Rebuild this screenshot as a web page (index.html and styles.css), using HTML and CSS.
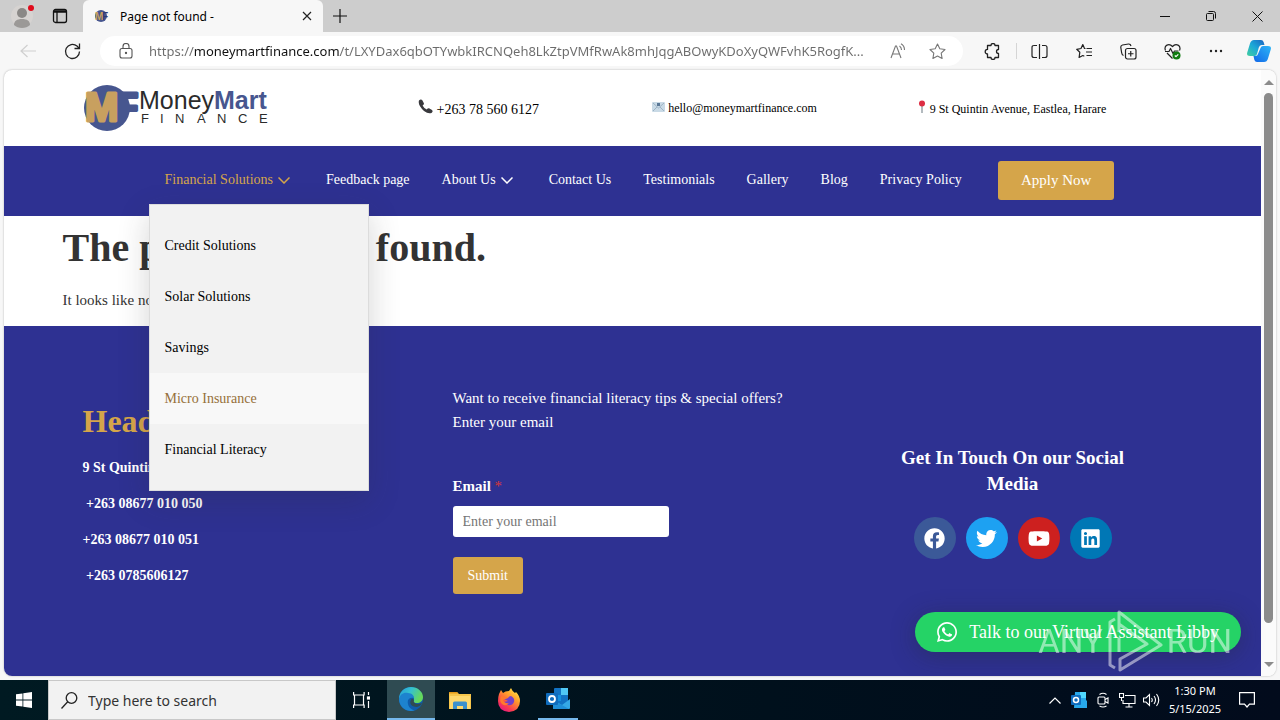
FILE: index.html
```
<!DOCTYPE html>
<html lang="en">
<head>
<meta charset="utf-8">
<title>Page not found -</title>
<link rel="stylesheet" href="styles.css">
</head>
<body>
<div class="tabstrip">
	<button class="chromeBtn profile" aria-label="Profile">
		<svg width="26" height="26" viewBox="0 0 26 26"><circle cx="12" cy="13" r="11" fill="#d6d3d1"/><circle cx="12" cy="10" r="5" fill="#8a8886"/><path d="M4 22c0-4 3-6 8-6s8 2 8 6c-2 2-5 3-8 3s-6-1-8-3z" fill="#9b9997"/><circle cx="21" cy="5" r="3" fill="#e00b1c"/></svg>
	</button>
	<button class="chromeBtn workspaces" aria-label="Tab actions">
		<svg width="16" height="16" viewBox="0 0 16 16" fill="none" stroke="#111" stroke-width="1.3"><rect x="1.5" y="1.5" width="13" height="13" rx="2"/><path d="M2 3.5h12" stroke-width="2.5"/><path d="M5 4v10"/></svg>
	</button>
	<div class="tab">
		<svg width="14" height="14" viewBox="0 0 14 14"><circle cx="6" cy="7" r="6" fill="#47568f"/><text x="7" y="11" class="favF">F</text><text x="0" y="11" class="favM">M</text></svg>
		<span class="tabTitle">Page not found -</span>
		<button class="chromeBtn" aria-label="Close tab"><svg width="10" height="10" viewBox="0 0 10 10" stroke="#222" stroke-width="1.2"><path d="M1 1l8 8M9 1l-8 8"/></svg></button>
	</div>
	<button class="chromeBtn newTab" aria-label="New tab"><svg width="14" height="14" viewBox="0 0 14 14" stroke="#111" stroke-width="1.2"><path d="M7 0v14M0 7h14"/></svg></button>
	<div class="windowBtns">
		<button class="chromeBtn" aria-label="Minimize"><svg width="10" height="10" viewBox="0 0 10 10" stroke="#111"><path d="M0 5.500h10"/></svg></button>
		<button class="chromeBtn" aria-label="Restore"><svg width="10" height="10" viewBox="0 0 10 10" fill="none" stroke="#111"><rect x=".5" y="2.500" width="7" height="7" rx="1"/><path d="M2.500.5h5q2 0 2 2v5"/></svg></button>
		<button class="chromeBtn" aria-label="Close window"><svg width="11" height="11" viewBox="0 0 11 11" stroke="#111"><path d="M.5.5l10 10M10.500.5l-10 10"/></svg></button>
	</div>
</div>
<div class="toolbar">
	<button class="chromeBtn navBtn" aria-label="Back"><svg width="16" height="14" viewBox="0 0 16 14" fill="none" stroke="#cfcfcf" stroke-width="1.2"><path d="M7.500 1L1 7l6.500 6M1 7h15"/></svg></button>
	<button class="chromeBtn navBtn" aria-label="Refresh"><svg width="17" height="17" viewBox="0 0 17 17" fill="none" stroke="#222" stroke-width="1.300"><path d="M15.500 8.500a7 7 0 1 1-2.500-5.400l2 2M15.500.5v5h-5"/></svg></button>
	<div class="address">
		<svg width="14" height="16" viewBox="0 0 14 16" fill="none" stroke="#555" stroke-width="1.1"><rect x="1" y="5.500" width="12" height="9.500" rx="2"/><path d="M4 5.500V3.500a3 3 0 0 1 6 0v2"/><circle cx="7" cy="10" r=".6" fill="#555"/></svg>
		<input type="text" class="url" aria-label="Address" value="https://moneymartfinance.com/t/LXYDax6qbOTYwbkIRCNQeh8LkZtpVMfRwAk8mhJqgABOwyKDoXyQWFvhK5RogfK...">
		<button class="chromeBtn" aria-label="Read aloud"><svg width="16" height="16" viewBox="0 0 16 16" fill="none" stroke="#777" stroke-width="1.1"><path d="M1 15L5.500 3h1L11 15M2.500 11h7M9.500 3q2 1.500 2 4M11 .8q3.500 2 3.500 6.200"/></svg></button>
		<button class="chromeBtn" aria-label="Favorite"><svg width="17" height="17" viewBox="0 0 17 17" fill="none" stroke="#777" stroke-width="1.1" stroke-linejoin="round"><path d="M8.500 1l2.300 4.800 5.200.7-3.800 3.700.9 5.300-4.600-2.500-4.600 2.500.9-5.300L1 6.500l5.200-.7z"/></svg></button>
	</div>
	<div class="tools">
		<button class="chromeBtn" aria-label="Extensions"><svg width="17" height="17" viewBox="0 0 17 17" fill="none" stroke="#222" stroke-width="1.300" stroke-linejoin="round"><path d="M4.500 2.500H7a2 2 0 0 1 4 0h3.500V6.500a2 2 0 0 0 0 4v4H11a2 2 0 0 1-4 0H3.500V11a2.300 2.300 0 0 1 0-4.600V2.500z"/></svg></button>
		<button class="chromeBtn divided" aria-label="Split screen"><svg width="17" height="17" viewBox="0 0 17 17" fill="none" stroke="#222" stroke-width="1.200"><path d="M6 2.500H3q-2 0-2 2v8q0 2 2 2h3M11 2.500h3q2 0 2 2v8q0 2-2 2h-3M8.500 1v15"/></svg></button>
		<button class="chromeBtn" aria-label="Favorites"><svg width="17" height="17" viewBox="0 0 17 17" fill="none" stroke="#222" stroke-width="1.200" stroke-linejoin="round"><path d="M9.500 5.500h-1L6.800 1.500 5 5.500l-4.300.8 3.100 3-.7 5.200 3.700-2 1.500.8M10.500 5.500H16M10 9h6M10.500 12.500H16"/></svg></button>
		<button class="chromeBtn" aria-label="Collections"><svg width="17" height="17" viewBox="0 0 17 17" fill="none" stroke="#222" stroke-width="1.200"><rect x="5.500" y="5.500" width="10.500" height="10.500" rx="2"/><path d="M10.750 8v5.500M8 10.750h5.500M3.500 12.500Q2 12 1.700 10L.8 4.500q-.2-2 1.700-2.500l6-1q2-.2 2.500 2"/></svg></button>
		<button class="chromeBtn" aria-label="Browser essentials"><svg width="17" height="17" viewBox="0 0 17 17" fill="none" stroke="#222" stroke-width="1.200" stroke-linejoin="round"><path d="M1.500 7.500C-.5 2.500 5-.5 8.500 3.500c3.500-4 9-1 7 4M3 10l5.500 5.500M1 8.500h4l1.500-3 2.500 5 1.500-2.500h4"/><circle cx="12.500" cy="12.500" r="4" fill="#107c10" stroke="none"/><path d="M10.800 12.500l1.200 1.200 2.300-2.300" stroke="#fff"/></svg></button>
		<button class="chromeBtn" aria-label="Settings and more"><svg width="16" height="4" viewBox="0 0 16 4" fill="#222"><circle cx="3" cy="2" r="1.200"/><circle cx="8" cy="2" r="1.200"/><circle cx="13" cy="2" r="1.200"/></svg></button>
		<button class="chromeBtn" aria-label="Copilot"><svg width="24" height="24" viewBox="0 0 24 24"><defs><linearGradient id="cp1" x1="0" y1="1" x2="1" y2="0"><stop offset="0" stop-color="#43cf9f"/><stop offset=".5" stop-color="#1ba7d8"/><stop offset="1" stop-color="#1b62c0"/></linearGradient><linearGradient id="cp2" x1="0" y1="1" x2="1" y2="0"><stop offset="0" stop-color="#1267e8"/><stop offset="1" stop-color="#2db5f6"/></linearGradient></defs><path d="M7 1h7q2 0 2.600 2l.9 3h-3q-2 0-2.700 2.500L10 15q-.6 2-2.500 2H3q-4 0-2.600-4L3 4.500Q4 1 7 1z" fill="url(#cp1)"/><path d="M17 23h-7q-2 0-2.600-2l-.9-4h2q2 0 2.700-2.500L13.500 9q.7-2 2.500-2h5q4 0 2.600 4L21 19.500Q20 23 17 23z" fill="url(#cp2)"/></svg></button>
	</div>
</div>
<div class="viewport">
	<div class="page">
		<header class="siteHeader">
			<a class="logo" href="#" aria-label="MoneyMart Finance">
				<svg width="188" height="50" viewBox="0 0 188 50">
					<circle cx="24" cy="25" r="23" fill="#47568f"/>
					<text x="31" y="38" class="logoF">F</text>
					<text x="2" y="38" class="logoM">M</text>
					<text x="56" y="26" class="logoName">Money<tspan class="logoBold">Mart</tspan></text>
					<g class="logoSub"><text x="58" y="40">F</text><text x="77" y="40">I</text><text x="92" y="40">N</text><text x="114" y="40">A</text><text x="134" y="40">N</text><text x="155" y="40">C</text><text x="176" y="40">E</text></g>
				</svg>
			</a>
			<div class="contact large"><svg width="15" height="15" viewBox="0 0 15 15"><path d="M1 1.500Q3-.5 4.500 1.500L6 4.500Q5.800 6 4.600 6.500 6 9.500 8.800 10.500 9.600 9 11 9.200l3 1.700q1.500 1.500-.5 3-3 1.500-7.500-2Q-.5 6 1 1.500z" fill="#39393d"/></svg> +263 78 560 6127</div>
			<div class="contact"><svg width="13" height="10" viewBox="0 0 13 10"><rect width="13" height="10" rx="1" fill="#c9dae6"/><path d="M1 9l4-4M12 9L8 5M1 1l5.500 5L12 1" stroke="#9db3c5" fill="none"/><rect x="5" y="1" width="3" height="3" fill="#5b7896"/></svg> hello@moneymartfinance.com</div>
			<div class="contact"><svg width="10" height="13" viewBox="0 0 10 13"><path d="M5 6v7" stroke="#9aa3aa" stroke-width="1.500"/><circle cx="5" cy="3.500" r="3" fill="#dd2e44"/></svg> 9 St Quintin Avenue, Eastlea, Harare</div>
		</header>
		<nav class="siteNav">
			<ul class="menu">
				<li class="hasMenu open"><a href="#">Financial Solutions <svg width="12" height="7" viewBox="0 0 12 7"><path d="M.5.5L6 6 11.500.5"/></svg></a>
					<ul class="dropdown">
						<li><a href="#">Credit Solutions</a></li>
						<li><a href="#">Solar Solutions</a></li>
						<li><a href="#">Savings</a></li>
						<li class="hover"><a href="#">Micro Insurance</a></li>
						<li><a href="#">Financial Literacy</a></li>
					</ul>
				</li>
				<li><a href="#">Feedback page</a></li>
				<li class="hasMenu"><a href="#">About Us <svg width="12" height="7" viewBox="0 0 12 7"><path d="M.5.5L6 6 11.500.5"/></svg></a></li>
				<li><a href="#">Contact Us</a></li>
				<li><a href="#">Testimonials</a></li>
				<li><a href="#">Gallery</a></li>
				<li><a href="#">Blog</a></li>
				<li><a href="#">Privacy Policy</a></li>
			</ul>
			<a class="apply" href="#">Apply Now</a>
		</nav>
		<main class="content">
			<h1>The page can&rsquo;t be found.</h1>
			<p>It looks like nothing was found at this location.</p>
		</main>
		<footer class="siteFooter">
			<div class="office">
				<h2>Head Office</h2>
				<p>9 St Quintin Avenue</p>
				<p>&nbsp;+263 08677 010 050</p>
				<p>+263 08677 010 051</p>
				<p>&nbsp;+263 0785606127</p>
			</div>
			<form class="signup">
				<p>Want to receive financial literacy tips &amp; special offers?<br>Enter your email</p>
				<label for="email">Email <span class="required">*</span></label>
				<input type="email" id="email" placeholder="Enter your email">
				<button type="button">Submit</button>
			</form>
			<div class="social">
				<h3>Get In Touch On our Social Media</h3>
				<div class="socialLinks">
					<a class="facebook" href="#" aria-label="Facebook"><svg width="21" height="21" viewBox="0 0 512 512"><path fill="#fff" d="M504 256C504 119 393 8 256 8S8 119 8 256c0 123.800 90.700 226.400 209.300 245V327.700h-63V256h63v-54.600c0-62.200 37-96.500 93.700-96.500 27.100 0 55.500 4.800 55.500 4.800v61h-31.300c-30.800 0-40.400 19.100-40.400 38.700V256h68.800l-11 71.700h-57.800V501C413.300 482.400 504 379.800 504 256z"/></svg></a>
					<a class="twitter" href="#" aria-label="Twitter"><svg width="21" height="21" viewBox="0 0 512 512"><path fill="#fff" d="M459.400 151.700c.3 4.500.3 9.100.3 13.600 0 138.700-105.600 298.600-298.600 298.600-59.500 0-114.700-17.200-161.100-47.100 8.400 1 16.600 1.300 25.300 1.300 49.100 0 94.200-16.600 130.300-44.800-46.100-1-84.800-31.200-98.100-72.800 6.500 1 13 1.600 19.800 1.600 9.400 0 18.800-1.300 27.600-3.600-48.100-9.700-84.100-52-84.100-103v-1.300c14 7.800 30.200 12.700 47.400 13.300-28.300-18.800-46.800-51-46.800-87.400 0-19.500 5.200-37.400 14.300-53 51.700 63.700 129.300 105.300 216.400 109.800-1.600-7.800-2.600-15.900-2.600-24 0-57.800 46.800-104.900 104.900-104.900 30.200 0 57.500 12.700 76.700 33.100 23.700-4.500 46.500-13.300 66.600-25.300-7.800 24.400-24.400 44.800-46.100 57.800 21.100-2.300 41.600-8.100 60.400-16.200-14.300 20.800-32.200 39.300-52.600 54.300z"/></svg></a>
					<a class="youtube" href="#" aria-label="YouTube"><svg width="22" height="21" viewBox="0 0 576 512"><path fill="#fff" d="M549.700 124.100c-6.300-23.700-24.800-42.300-48.300-48.600C458.800 64 288 64 288 64S117.200 64 74.600 75.500c-23.500 6.300-42 24.900-48.300 48.600C15 167 15 256.400 15 256.400s0 89.400 11.400 132.300c6.300 23.600 24.800 41.500 48.300 47.800C117.200 448 288 448 288 448s170.800 0 213.400-11.500c23.500-6.300 42-24.200 48.300-47.800C561 345.800 561 256.400 561 256.400s0-89.400-11.300-132.300zM232 337.600V175.200l142.700 81.200z"/></svg></a>
					<a class="linkedin" href="#" aria-label="LinkedIn"><svg width="21" height="21" viewBox="0 0 448 512"><path fill="#fff" d="M416 32H32C14.400 32 0 46.500 0 64.300v383.400C0 465.500 14.400 480 32 480h384c17.600 0 32-14.500 32-32.300V64.300C448 46.500 433.600 32 416 32zM135.400 416H69V202.200h66.500V416zM102 173a38.500 38.500 0 1 1 0-77 38.500 38.500 0 0 1 0 77zm282 243h-66.400V312c0-24.800-.5-56.700-34.500-56.700-34.600 0-39.900 27-39.900 54.900V416h-66.400V202.200h63.700v29.200h.9c8.900-16.800 30.600-34.500 62.900-34.500 67.200 0 79.700 44.300 79.700 101.900z"/></svg></a>
				</div>
			</div>
		</footer>
		<a class="whatsapp" href="#">
			<svg width="20" height="20" viewBox="0 32 448 448"><path fill="#fff" d="M380.900 97.100C339 55.100 283.200 32 223.900 32 101.500 32 1.900 131.600 1.900 254c0 39.100 10.200 77.300 29.600 111L0 480l117.700-30.900c32.400 17.700 68.900 27 106.100 27h.1c122.300 0 224.100-99.600 224.100-222 0-59.300-25.200-115-67.100-157zm-157 341.600c-33.200 0-65.700-8.900-94-25.700l-6.700-4-69.800 18.300L72 359.200l-4.400-7C49.100 322.800 39.400 288.900 39.400 254c0-101.700 82.800-184.500 184.600-184.500 49.300 0 95.600 19.200 130.400 54.100s56.200 81.200 56.100 130.500c0 101.800-84.900 184.600-186.600 184.600zm101.200-138.200c-5.500-2.800-32.800-16.200-37.900-18-5.100-1.900-8.800-2.800-12.500 2.800s-14.300 18-17.600 21.800c-3.200 3.700-6.500 4.200-12 1.400-32.600-16.300-54-29.100-75.500-66-5.700-9.800 5.700-9.100 16.300-30.300 1.800-3.700.9-6.900-.5-9.700s-12.500-30.100-17.100-41.200c-4.500-10.800-9.100-9.300-12.500-9.500-3.200-.2-6.900-.2-10.600-.2s-9.700 1.400-14.800 6.900c-5.100 5.600-19.400 19-19.400 46.300s19.900 53.700 22.600 57.400c2.800 3.700 39.100 59.700 94.800 83.800 35.200 15.200 49 16.500 66.600 13.900 10.700-1.600 32.800-13.400 37.400-26.400s4.600-24.100 3.200-26.400c-1.300-2.500-5-3.900-10.500-6.600z"/></svg>
			Talk to our Virtual Assistant Libby
		</a>
	</div>
	<div class="scrollbar"><span class="arrowUp"></span><span class="thumb"></span><span class="arrowDown"></span></div>
	<div class="watermark">
		<span>ANY</span>
		<svg width="56" height="62" viewBox="0 0 56 62" fill="none" stroke="#fff" stroke-width="3" stroke-linejoin="round"><path d="M12 22V2l42 33-41 25V49l27-15-28-20M12 28v14M8 9L3 12v43l5 3"/></svg>
		<span>RUN</span>
	</div>
</div>
<div class="taskbar">
	<button class="taskBtn start" aria-label="Start"><svg width="16" height="16" viewBox="0 0 16 16" fill="#fff"><path d="M0 2.300l6.500-.9v6.200H0zM7.300 1.300L16 0v7.600H7.300zM0 8.400h6.500v6.200L0 13.700zM7.300 8.400H16V16l-8.700-1.300z"/></svg></button>
	<div class="search">
		<svg width="17" height="17" viewBox="0 0 17 17" fill="none" stroke="#222" stroke-width="1.300"><circle cx="10.500" cy="6" r="5.300"/><path d="M6.700 9.800L.5 16.500"/></svg>
		<input type="text" aria-label="Search" placeholder="Type here to search">
	</div>
	<button class="taskBtn taskView" aria-label="Task view"><svg width="17" height="16" viewBox="0 0 17 16" fill="none" stroke="#fff" stroke-width="1.200"><path d="M.6 0v3h10.500V0M.6 16v-3h10.500v3M1.500 3v10M10.500 3v10M15.500 0v3M15.500 9v7"/><rect x="14.500" y="5" width="2" height="2" fill="#fff"/></svg></button>
	<button class="taskBtn active running" aria-label="Edge"><svg width="24" height="24" viewBox="0 0 24 24"><defs><linearGradient id="edge1" x1="0" y1="0" x2="1" y2=".4"><stop offset="0" stop-color="#249bd8"/><stop offset=".5" stop-color="#35c1d0"/><stop offset="1" stop-color="#66d95a"/></linearGradient></defs><circle cx="12" cy="12" r="12" fill="#0f5cab"/><path d="M0 12C0 5 5 0 12 0c7 0 12 5 12 10 0 4-3 6-6 6-4 0-4-2-3-3 .5-4-3-6-6-6-5 0-8 3-9 5z" fill="url(#edge1)"/><path d="M0 12c1-5 5-7 9-6 4 0 6 3 6 5-5-1-7 2-6 6 1 4 4 6 7 6.500C6 26 0 19 0 12z" fill="#1d83cf"/><path d="M15 13c-1 2 1 4 4 4 2 0 4-1 4-.5-2 3-5 4-8 3-4-1-5-5-2-8z" fill="#2f4b52"/></svg></button>
	<button class="taskBtn" aria-label="File Explorer"><svg width="22" height="19" viewBox="0 0 22 19"><path d="M0 1h8l2 2h12v15H0z" fill="#f7c64b"/><path d="M0 1h8l1 1.500H0z" fill="#e59b19"/><path d="M1 5h20v13H1z" fill="#ffd96e"/><path d="M4 18v-6q0-1.500 1.500-1.500h11q1.500 0 1.500 1.500v6h-4v-3H8v3z" fill="#3d91cd"/></svg></button>
	<button class="taskBtn" aria-label="Firefox"><svg width="24" height="24" viewBox="0 0 24 24"><defs><linearGradient id="ff" x1=".9" y1="0" x2=".2" y2="1"><stop offset="0" stop-color="#fff14a"/><stop offset=".4" stop-color="#ff9a2b"/><stop offset=".75" stop-color="#fb3c50"/><stop offset="1" stop-color="#e31587"/></linearGradient></defs><path d="M2 6l2-4 2 3q2-2 6-2l2-3q1 3 4 5l1-1q4 4 4 9 0 10-11 11Q1 23 1 13q0-4 1-7z" fill="url(#ff)"/><path d="M7 11l4-1q1-2 3-2 4 2 3 6-2 4-6 3-3-1-4-3l4-1z" fill="#7340c9"/><path d="M4 8q3 0 7 2-3 1-5 2 2 4 6 3-3 4-7 1-3-3-1-8z" fill="#ff7a2d"/></svg></button>
	<button class="taskBtn running narrow" aria-label="Outlook"><svg width="24" height="22" viewBox="0 0 24 22"><path d="M8 1q0-1 1-1h12q1 0 1 1v17H8z" fill="#1273c4"/><path d="M15 0h7v7h-7z" fill="#50c8f5"/><path d="M8 7h7v6H8z" fill="#1490df"/><path d="M7 12l9 5 8-6v9q0 1-1 1H8q-1 0-1-1z" fill="#35a9e6"/><path d="M7 12l16 9H8q-1 0-1-1z" fill="#1f8fd8"/><rect y="5" width="12" height="12" rx="1" fill="#0f6cbd"/><circle cx="6" cy="11" r="3" fill="none" stroke="#fff" stroke-width="1.800"/></svg></button>
	<div class="tray">
		<button class="trayBtn" aria-label="Hidden icons"><svg width="12" height="7" viewBox="0 0 12 7" fill="none" stroke="#fff" stroke-width="1.200"><path d="M.5 6.500L6 1l5.500 5.500"/></svg></button>
		<button class="trayBtn" aria-label="Outlook"><svg width="16" height="16" viewBox="0 0 16 16"><path d="M4 0h11v8l1 1v7H3z" fill="#28a8ea"/><path d="M9 0h6v6H9z" fill="#50d9ff"/><rect y="3" width="10" height="10" rx="1" fill="#0f6cbd"/><circle cx="5" cy="8" r="2.500" fill="none" stroke="#fff" stroke-width="1.500"/></svg></button>
		<button class="trayBtn" aria-label="Meet now"><svg width="12" height="16" viewBox="0 0 12 16" fill="none" stroke="#fff" stroke-width="1.100"><rect x="1" y="5" width="7" height="7" rx="1"/><path d="M8 7.500l3-1.500v5l-3-1.500M2.500 2.500q3.500-2.500 7 0M2.500 14q3.500 2 7 0"/></svg></button>
		<button class="trayBtn" aria-label="Network"><svg width="17" height="15" viewBox="0 0 17 15" fill="none" stroke="#fff" stroke-width="1.100"><path d="M6 2.500h10v8H4V7M10 10.500V14M6.500 14h7M.5.5h4v4h-4zM2.500 4.500V8"/></svg></button>
		<button class="trayBtn" aria-label="Volume"><svg width="17" height="14" viewBox="0 0 17 14" fill="none" stroke="#fff" stroke-width="1.100"><path d="M.5 5v4H3l3.500 3.500v-11L3 5zM8.500 5q1.500 2 0 4M11 3q3 4 0 8M13.500 1q4.500 6 0 12"/></svg></button>
		<div class="clock"><span>1:30 PM</span><span>5/15/2025</span></div>
		<button class="trayBtn notify" aria-label="Notifications"><svg width="16" height="16" viewBox="0 0 16 16" fill="none" stroke="#fff" stroke-width="1.200"><path d="M.6.6h14.800v11.500H10.500L8 15l-2.500-2.900H.6z"/></svg></button>
	</div>
</div>
</body>
</html>
```
FILE: styles.css
```
*{
	box-sizing:border-box;
}
html,body{
	margin:0;
	padding:0;
	height:100%;
}
body{
	display:flex;
	flex-direction:column;
	overflow:hidden;
	background-color:#f7f7f7;
	font-family:"Liberation Serif","Times New Roman",serif;
	font-size:15px;
}
a{
	color:inherit;
	text-decoration:none;
}
ul{
	list-style:none;
	margin:0;
	padding:0;
}
svg{
	flex:none;
}

/* browser window */
.chromeBtn,.taskBtn,.trayBtn{
	display:flex;
	align-items:center;
	justify-content:center;
	border:none;
	background:none;
	padding:0;
	flex:none;
}
.tabstrip{
	display:flex;
	height:32px;
	flex:none;
	background-color:#cdcdcd;
}
.profile{
	width:46px;
}
.workspaces{
	width:28px;
	margin-right:9px;
}
.tab{
	display:flex;
	align-items:center;
	width:240px;
	padding:0 11px 0 12px;
	gap:11px;
	background-color:#f7f7f7;
	border-radius:6px 6px 0 0;
	font-family:"Noto Sans","Open Sans",sans-serif;
	font-size:12px;
}
.tabTitle{
	flex:1;
}
.favM,.favF{
	font:bold 10px "Liberation Sans",Arial,sans-serif;
	fill:#c8a05f;
}
.favF{
	fill:#2f3a70;
}
.newTab{
	width:34px;
}
.windowBtns{
	display:flex;
	margin-left:auto;
}
.windowBtns>.chromeBtn{
	width:46px;
}
.toolbar{
	display:flex;
	align-items:center;
	height:38px;
	flex:none;
	padding-left:6px;
}
.navBtn{
	width:44px;
}
.address{
	display:flex;
	align-items:center;
	flex:1;
	height:30px;
	margin-left:6px;
	padding:0 17px 0 19px;
	border-radius:15px;
	background-color:#fff;
}
.address>.chromeBtn{
	margin-left:23px;
}
.url{
	flex:1;
	min-width:0;
	margin-left:16px;
	padding:0;
	border:none;
	outline:none;
	font-family:"Noto Sans","Open Sans",sans-serif;
	font-size:13px;
	color:transparent;
	/* scheme and path grey, host black */
	background:linear-gradient(90deg,#6b6b6b 45px,#111 45px,#111 191px,#6b6b6b 191px);
	-webkit-background-clip:text;
	background-clip:text;
}
.tools{
	display:flex;
	margin-left:7px;
}
.tools>.chromeBtn{
	width:44px;
	height:30px;
}
.tools>.divided{
	margin-left:2px;
	width:46px;
	border-left:1px solid #d5d5d5;
	height:16px;
	align-self:center;
}
.tools>.chromeBtn:last-child{
	width:42px;
}
.viewport{
	position:relative;
	display:flex;
	flex:1;
	min-height:0;
	margin:0 4px 4px 4px;
	border-radius:8px;
	overflow:hidden;
	background-color:#fff;
	box-shadow:0 0 2px rgba(0,0,0,0.3);
}
.scrollbar{
	display:flex;
	flex-direction:column;
	align-items:center;
	width:15px;
	padding:10px 0 9px 0;
	background-color:#fbfbfb;
}
.thumb{
	width:9px;
	flex:1;
	margin:8px 0 39px 0;
	border-radius:5px;
	background-color:#8b8b8b;
}
.arrowUp,.arrowDown{
	border:5px solid transparent;
	border-top:none;
	border-bottom:5px solid #8b8b8b;
}
.arrowDown{
	border-bottom:none;
	border-top:5px solid #8b8b8b;
}

/* site */
.page{
	position:relative;
	display:flex;
	flex-direction:column;
	flex:1;
	min-width:0;
}
.siteHeader,.siteNav,.content,.siteFooter{
	padding-left:calc(50% - 570px);
	padding-right:calc(50% - 570px);
}
.siteHeader{
	display:grid;
	grid-template-columns:288fr 256fr 256fr 298fr 42fr;
	align-items:center;
	height:76px;
	flex:none;
	color:#000;
}
.logo{
	display:flex;
	padding-left:20px;
}
.logoM,.logoF{
	font:bold 40px "Liberation Sans",Arial,sans-serif;
	fill:#c8a05f;
	stroke:#c8a05f;
	stroke-width:3;
	stroke-linejoin:round;
}
.logoF{
	fill:#47568f;
	stroke:#47568f;
}
.logoName{
	font:25px "Liberation Sans",Arial,sans-serif;
	fill:#2b2b2b;
}
.logoBold{
	font-weight:bold;
	fill:#47568f;
}
.logoSub{
	font:13px "Liberation Sans",Arial,sans-serif;
	fill:#2b2b2b;
}
.contact{
	text-align:center;
	font-size:12px;
}
.contact.large{
	font-size:14px;
}
.siteNav{
	display:flex;
	align-items:center;
	height:70px;
	flex:none;
	padding-bottom:2px;
	background-color:#2e3192;
	color:#fff;
	font-size:14px;
}
.menu{
	display:flex;
	margin-left:86px;
}
.menu>li{
	position:relative;
}
.menu>li>a{
	display:flex;
	align-items:center;
	gap:5px;
	height:48px;
	padding:0 16px;
}
.menu>.hasMenu>a{
	padding-right:20px;
}
.menu svg{
	fill:none;
	stroke:currentColor;
	stroke-width:1.5;
}
.open>a{
	color:#d5a54a;
}
.dropdown{
	position:absolute;
	z-index:2;
	top:100%;
	left:0;
	width:220px;
	padding:15px 0;
	border:1px solid #dcdcdc;
	background-color:#f2f2f2;
	box-shadow:0 10px 30px rgba(45,45,45,0.2);
	color:#000;
	font-size:14px;
}
.dropdown a{
	display:block;
	padding:0 15px;
	line-height:51px;
}
.dropdown .hover{
	background-color:#f8f8f8;
	color:#96703a;
}
.apply{
	margin-left:20px;
	padding:0 23px;
	border-radius:3px;
	background-color:#d5a54a;
	font-size:15px;
	line-height:39px;
}
.content{
	height:110px;
	flex:none;
	color:#333;
}
.content h1{
	margin:8px 0 0 0;
	font-size:40px;
	line-height:48px;
}
.content p{
	margin:16px 0 0 0;
	line-height:24px;
}
.siteFooter{
	display:grid;
	grid-template-columns:repeat(3,1fr);
	align-items:center;
	flex:1;
	padding-top:2px;
	background-color:#2e3192;
	color:#fff;
}
.office{
	padding:0 0 8px 20px;
	font-size:14px;
	font-weight:bold;
}
.office h2{
	margin:0 0 10px 0;
	font-size:32px;
	line-height:38px;
	color:#d5a54a;
}
.office p{
	margin:0;
	line-height:36px;
}
.signup{
	display:flex;
	flex-direction:column;
	align-items:flex-start;
	padding:0 10px;
}
.signup p{
	margin:0 0 40px 0;
	line-height:24px;
}
.signup label{
	margin-bottom:8px;
	font-size:15px;
	line-height:24px;
	font-weight:bold;
}
.required{
	color:#d63637;
	font-weight:normal;
}
.signup input{
	width:216px;
	height:31px;
	padding:0 10px;
	border:none;
	border-radius:3px;
	background-color:#fff;
	font-family:inherit;
	font-size:14px;
}
.signup button{
	margin:20px 0 24px 0;
	padding:0 15px;
	height:37px;
	border:none;
	border-radius:3px;
	background-color:#d5a54a;
	color:#fff;
	font-family:inherit;
	font-size:14px;
}
.social{
	display:flex;
	flex-direction:column;
	align-items:center;
}
.social h3{
	width:260px;
	margin:0 0 20px 0;
	font-size:19px;
	line-height:26px;
	text-align:center;
}
.socialLinks{
	display:flex;
	gap:10px;
}
.socialLinks a{
	display:flex;
	align-items:center;
	justify-content:center;
	width:42px;
	height:42px;
	border-radius:50%;
}
.facebook{
	background-color:#3b5998;
}
.twitter{
	background-color:#1da1f2;
}
.youtube{
	background-color:#cd201f;
}
.linkedin{
	background-color:#0077b5;
}
.whatsapp{
	position:absolute;
	right:20px;
	bottom:24px;
	display:flex;
	align-items:center;
	gap:12px;
	height:40px;
	padding:0 22px;
	border-radius:20px;
	background-color:#25d366;
	box-shadow:0 4px 24px rgba(38,38,38,0.35);
	color:#fff;
	font-size:18px;
}
.watermark{
	position:absolute;
	right:44px;
	bottom:4px;
	display:flex;
	align-items:center;
	gap:4px;
	color:#fff;
	opacity:0.5;
	font-family:Roboto,"Liberation Sans",sans-serif;
	font-size:33px;
	pointer-events:none;
}

/* taskbar */
.taskbar{
	display:flex;
	height:40px;
	flex:none;
	background:linear-gradient(90deg,#001a22,#00101c 60%,#020b1c);
}
.taskBtn{
	width:48px;
	margin-right:1px;
}
.start{
	margin-right:0;
}
.taskView{
	width:50px;
}
.search{
	display:flex;
	align-items:center;
	gap:10px;
	width:288px;
	padding:0 12px;
	border:1px solid #c8c8c8;
	background-color:#f2f2f2;
}
.search input{
	flex:1;
	min-width:0;
	padding:0;
	border:none;
	background:none;
	font-family:"Noto Sans","Open Sans",sans-serif;
	font-size:14px;
}
.search input::placeholder{
	color:#333;
}
.active{
	background-color:#2f4b52;
}
.running{
	border-bottom:2px solid #76b9ed;
}
.narrow{
	width:40px;
	margin-left:4px;
}
.tray{
	display:flex;
	margin-left:auto;
}
.trayBtn{
	width:24px;
}
.clock{
	display:flex;
	flex-direction:column;
	justify-content:center;
	width:64px;
	text-align:center;
	color:#fff;
	font-family:"Noto Sans","Open Sans",sans-serif;
	font-size:11px;
	line-height:18px;
}
.notify{
	width:40px;
	margin-right:13px;
}
```
